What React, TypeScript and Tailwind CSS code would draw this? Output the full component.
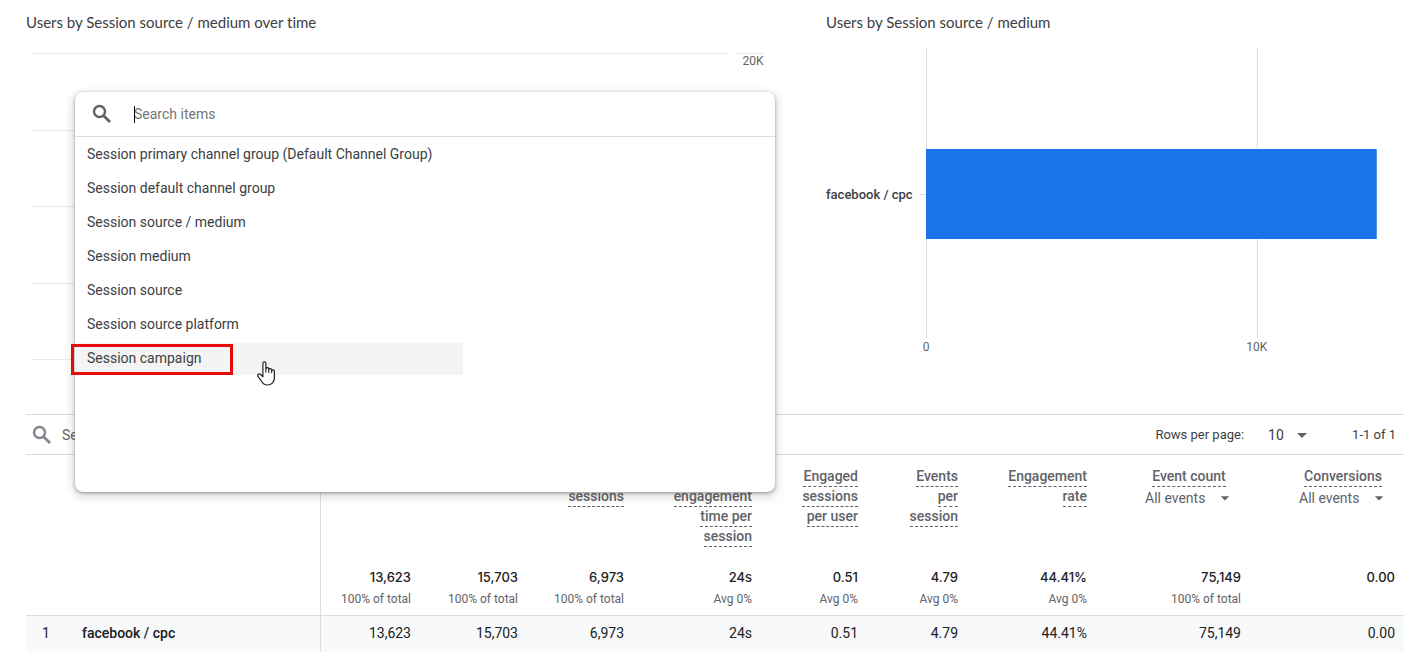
import { useState } from "react";
import { MdArrowDropDown } from "react-icons/md";

interface Metric {
  id: string;
  lines: string[];
  total: string;
  note: string;
  value: string;
  width: string;
  filter?: boolean;
}

const METRICS: Metric[] = [
  { id: "users", lines: ["Users"], total: "13,623", note: "100% of total", value: "13,623", width: "w-[99px]" },
  { id: "sessions", lines: ["Sessions"], total: "15,703", note: "100% of total", value: "15,703", width: "w-[107px]" },
  { id: "engaged", lines: ["Engaged", "sessions"], total: "6,973", note: "100% of total", value: "6,973", width: "w-[106px]" },
  { id: "avg-time", lines: ["Average", "engagement", "time per", "session"], total: "24s", note: "Avg 0%", value: "24s", width: "w-[128px]" },
  { id: "per-user", lines: ["Engaged", "sessions", "per user"], total: "0.51", note: "Avg 0%", value: "0.51", width: "w-[106px]" },
  { id: "events", lines: ["Events", "per", "session"], total: "4.79", note: "Avg 0%", value: "4.79", width: "w-[100px]" },
  { id: "rate", lines: ["Engagement", "rate"], total: "44.41%", note: "Avg 0%", value: "44.41%", width: "w-[129px]" },
  { id: "event-count", lines: ["Event count"], total: "75,149", note: "100% of total", value: "75,149", width: "w-[154px]", filter: true },
  { id: "conversions", lines: ["Conversions"], total: "0.00", note: "", value: "0.00", width: "w-[154px]", filter: true },
];

const DIMENSIONS = [
  "Session primary channel group (Default Channel Group)",
  "Session default channel group",
  "Session source / medium",
  "Session medium",
  "Session source",
  "Session source platform",
  "Session campaign",
];

const GRID_LINES = [5, 82, 158, 235, 311];

function SearchIcon() {
  return (
    <svg width="24" height="24" viewBox="0 0 24 24" fill="none" stroke="currentColor" strokeWidth="2.4" aria-hidden="true">
      <circle cx="9.5" cy="9.5" r="5.5" />
      <path d="M13.4 13.4 20 20" strokeWidth="2.8" />
    </svg>
  );
}

function LineChart() {
  return (
    <section>
      <h2 className="font-[Lato,sans-serif] text-[15px] leading-5 text-[#3c4043] [font-variant-ligatures:none]">Users by Session source / medium over time</h2>
      <svg className="mt-4 block h-[340px] w-full" aria-label="Users over time">
        {GRID_LINES.map((y) => (
          <rect key={y} x="6" y={y} width="87%" height="1" fill="#e8eaed" />
        ))}
        <rect x="88.5%" y="5" width="30" height="1" fill="#e8eaed" />
        <text x="92.2%" y="17" textAnchor="end" fontSize="12" fill="#5f6368">20K</text>
      </svg>
    </section>
  );
}

function BarChart() {
  return (
    <section>
      <h2 className="font-[Lato,sans-serif] text-[15px] leading-5 text-[#3c4043] [font-variant-ligatures:none]">Users by Session source / medium</h2>
      <div className="mt-4 flex">
        <div className="flex h-[293px] w-[100px] shrink-0 items-center justify-between text-[13px] font-medium text-[#3c4043]">
          <span>facebook / cpc</span>
          <span className="h-px w-1.5 bg-[#dadce0]" />
        </div>
        <svg className="block h-[340px] min-w-0 flex-1 overflow-visible" aria-label="Users by source">
          <rect x="0" y="0" width="1" height="290" fill="#dadce0" />
          <rect x="69.2%" y="0" width="1" height="290" fill="#dadce0" />
          <rect x="0" y="101" width="94.3%" height="90" fill="#1a73e8" />
          <text x="0" y="303" textAnchor="middle" fontSize="12" fill="#5f6368">0</text>
          <text x="69.2%" y="303" textAnchor="middle" fontSize="12" fill="#5f6368">10K</text>
        </svg>
      </div>
    </section>
  );
}

function TableToolbar() {
  return (
    <div className="flex h-[41px] items-center border-y border-[#dadce0] pr-2 text-[13px] text-[#3c4043]">
      <label htmlFor="table-search" className="ml-1 text-[#80868b]">
        <SearchIcon />
      </label>
      <input id="table-search" aria-label="Search table" placeholder="Search…" className="ml-2 w-60 text-sm outline-none placeholder:text-[#5f6368]" />
      <label htmlFor="rows" className="ml-auto">Rows per page:</label>
      <div className="relative ml-6 flex items-center">
        <select id="rows" defaultValue="10" className="w-[42px] appearance-none text-sm outline-none">
          <option>10</option>
          <option>25</option>
        </select>
        <MdArrowDropDown size={24} className="pointer-events-none absolute -right-1 text-[#5f6368]" />
      </div>
      <span className="ml-[42px]">1-1 of 1</span>
    </div>
  );
}

function MetricHeader({ metric }: { metric: Metric }) {
  return (
    <div className={metric.filter ? "ml-auto flex w-[104px] flex-col items-center" : "flex flex-col items-end"}>
      {metric.lines.map((line) => (
        <span key={line} className="-mb-px box-content h-5 border-b border-dashed border-[#5f6368] leading-5">{line}</span>
      ))}
      {metric.filter && (
        <div className="relative flex items-center font-normal">
          <select aria-label={`${metric.lines[0]} filter`} className="w-[88px] appearance-none text-sm leading-6 outline-none">
            <option>All events</option>
          </select>
          <MdArrowDropDown size={20} className="pointer-events-none absolute -right-0.5" />
        </div>
      )}
    </div>
  );
}

function MetricsTable() {
  return (
    <table className="w-full table-fixed border-separate border-spacing-0 text-right text-sm text-[#202124]">
      <thead>
        <tr className="h-[112px] align-top text-[#5f6368]">
          <th className="w-[295px] border-r border-[#dadce0] pt-[11px] pl-14 text-left font-medium">Session source / medium</th>
          {METRICS.map((m) => (
            <th key={m.id} className={`${m.width} pt-[11px] pr-[9px] font-medium`}>
              <MetricHeader metric={m} />
            </th>
          ))}
        </tr>
      </thead>
      <tbody>
        <tr className="h-[49px] align-top">
          <td className="border-r border-b border-[#dadce0]" />
          {METRICS.map((m) => (
            <td key={m.id} className="border-b border-[#dadce0] pr-[9px]">
              <div className="font-[Inter,sans-serif] text-[13px] leading-5 font-medium">{m.total}</div>
              <div className="pt-0.5 text-xs leading-5 text-[#5f6368]">{m.note}</div>
            </td>
          ))}
        </tr>
        <tr className="h-9 bg-[#f8f9fa]">
          <td className="border-r border-[#dadce0] pb-0.5 text-left">
            <span className="inline-block w-10 text-center">1</span>
            <span className="ml-4 font-medium">facebook / cpc</span>
          </td>
          {METRICS.map((m) => (
            <td key={m.id} className="pr-[9px] pb-0.5">{m.value}</td>
          ))}
        </tr>
      </tbody>
    </table>
  );
}

function HandCursor() {
  return (
    <svg className="pointer-events-none absolute top-[18px] left-[182px]" width="19" height="25" viewBox="0 0 19 25" aria-hidden="true">
      <path
        d="M5.9 14.6V2.6c0-2.3 3-2.3 3 0v4.9c.3-1.3 2.9-1.1 2.9.4v.4c.5-1.2 2.9-.9 2.9.6v.5c.7-1 2.7-.6 2.7 1.1v6.2c0 4-2.7 7.3-6.9 7.3-3.3 0-4.9-1.6-6.2-4.2L1 15.4c-.9-1.9.9-3.2 2.4-2.1l2.5 2.4Z"
        fill="#fff"
        stroke="#202124"
        strokeWidth="1.2"
        strokeLinejoin="round"
      />
      <path d="M8.9 7.5v3.6M11.8 8.2v3.2M14.7 9.2v2.6" stroke="#202124" strokeWidth="1.1" strokeLinecap="round" />
    </svg>
  );
}

function DimensionPicker() {
  const [query, setQuery] = useState("");
  const items = DIMENSIONS.filter((d) => d.toLowerCase().includes(query.toLowerCase()));

  return (
    <div className="absolute top-[92px] left-[75px] h-[400px] w-[700px] rounded-lg bg-white shadow-[0_1px_3px_rgba(60,64,67,0.45),0_3px_8px_2px_rgba(60,64,67,0.2)]">
      <div className="flex h-[45px] items-center border-b border-[#dadce0] pl-[15px]">
        <label htmlFor="dimension-search" className="text-[#5f6368]">
          <SearchIcon />
        </label>
        <div className="relative ml-5 flex flex-1 items-center">
          <input id="dimension-search" aria-label="Search items" value={query} onChange={(e) => setQuery(e.target.value)} placeholder="Search items" className="w-full text-sm outline-none placeholder:text-[#757575]" />
          {!query && <span className="absolute left-0 h-[17px] w-px bg-black" />}
        </div>
      </div>
      <ul className="flex w-[388px] flex-col gap-0.5 pt-0.5 text-sm text-[#3c4043]">
        {items.map((name) => {
          const active = name === "Session campaign";
          return (
            <li key={name} className="relative">
              <button className={`flex h-8 w-full items-center pb-0.5 pl-3 text-left ${active ? "bg-[#f5f4f5]" : ""}`}>{name}</button>
              {active && (
                <>
                  <span className="pointer-events-none absolute top-px -left-1 h-[31px] w-[162px] border-3 border-[#e60c0c]" />
                  <HandCursor />
                </>
              )}
            </li>
          );
        })}
      </ul>
    </div>
  );
}

export default function App() {
  return (
    <main className="relative bg-white pt-3 pr-1 pb-1 pl-[26px] font-[Roboto,sans-serif]">
      <div className="grid h-[402px] grid-cols-[800fr_578fr]">
        <LineChart />
        <BarChart />
      </div>
      <TableToolbar />
      <MetricsTable />
      <DimensionPicker />
    </main>
  );
}
